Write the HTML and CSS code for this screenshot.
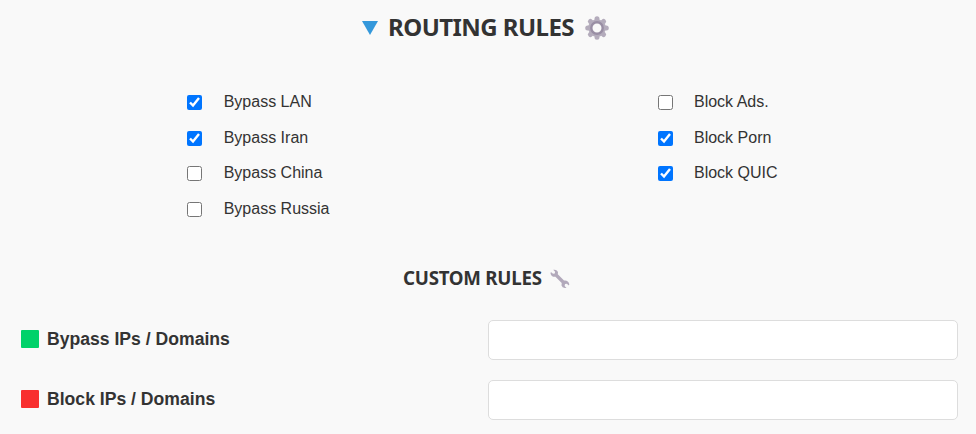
FILE: index.html
```
<!DOCTYPE html>
<html lang="en">
<head>
<meta charset="utf-8">
<title>Routing Rules</title>
<link rel="stylesheet" href="styles.css">
</head>
<body>
<main class="panel">
  <h2 class="title">
    <svg class="arrow" viewBox="0 0 16 14"><path d="M0 0H16L8 14Z" fill="#3498db"/></svg>
    <span class="title-text">ROUTING RULES</span>
    <svg class="gear" viewBox="-12 -12 24 24">
      <g stroke="#b4acbc" stroke-width="5" stroke-linecap="round"><path d="M0-9.3V9.3M-9.3 0H9.3M-6.6-6.6L6.6 6.6M6.6-6.6L-6.6 6.6"/></g>
      <circle r="8.7" fill="#b4acbc"/>
      <circle r="5.7" fill="#f9f9f9" stroke="#998ea4" stroke-width="2.4"/>
    </svg>
  </h2>
  <section class="options">
    <div class="column">
      <label class="option"><input type="checkbox" checked><span>Bypass LAN</span></label>
      <label class="option"><input type="checkbox" checked><span>Bypass Iran</span></label>
      <label class="option"><input type="checkbox"><span>Bypass China</span></label>
      <label class="option"><input type="checkbox"><span>Bypass Russia</span></label>
    </div>
    <div class="column">
      <label class="option"><input type="checkbox"><span>Block Ads.</span></label>
      <label class="option"><input type="checkbox" checked><span>Block Porn</span></label>
      <label class="option"><input type="checkbox" checked><span>Block QUIC</span></label>
    </div>
  </section>
  <h3 class="subtitle">
    <span class="subtitle-text">CUSTOM RULES</span>
    <svg class="wrench" viewBox="0 0 20 20"><path d="M3.2.8Q7.2.1 8 3.5L7.8 5.3L14 11.6Q18.2 11 19.3 15.2L18.9 16.6L16.8 14.7L15 15.1L14.6 16.9L16.5 18.9Q12.4 19.8 11.5 16.6L11.7 14.1L5.4 7.8Q1.5 8.3 .5 4.4L.9 3L3 4.8L4.8 4.5L5.1 2.7Z" fill="#b2a9bb"/></svg>
  </h3>
  <section class="fields">
    <div class="field"><label for="bypass"><i class="swatch green"></i><span>Bypass IPs / Domains</span></label><input id="bypass" type="text"></div>
    <div class="field"><label for="block"><i class="swatch red"></i><span>Block IPs / Domains</span></label><input id="block" type="text"></div>
  </section>
</main>
</body>
</html>
```
FILE: styles.css
```
* { box-sizing: border-box; }
body {
  margin: 0;
  background: #f9f9f9;
  color: #333;
  font: 16px "Liberation Sans", Arial, sans-serif;
  overflow: hidden;
}
svg { display: block; flex: none; }
.panel { height: 434px; padding: 10px 18px 0 20px; }
.title, .subtitle {
  display: flex;
  align-items: center;
  margin: 0;
  font-family: "Noto Sans", "Open Sans", sans-serif;
  font-weight: 700;
  white-space: nowrap;
}
.title { height: 34px; padding-left: 342px; font-size: 24px; }
.arrow { width: 16px; height: 14px; margin: 1px 10px 0 0; }
.title-text { width: 186px; letter-spacing: -0.55px; padding-bottom: 2px; }
.gear { width: 24px; height: 24px; margin: 1px 0 0 11px; }
.options {
  display: grid;
  grid-template-columns: 470px 1fr;
  padding: 40px 0 0 167px;
  height: 216px;
}
.option {
  display: flex;
  align-items: center;
  height: 35.7px;
}
.option input { width: 15px; height: 15px; margin: 1px 21.7px 0 0; }
.column + .column input { margin: 1px 21.4px 0 0.6px; }
.subtitle { height: 34px; padding-left: 383px; margin-top: 1px; font-size: 18.7px; }
.subtitle-text { width: 139px; letter-spacing: -0.25px; padding-bottom: 1px; }
.wrench { width: 20px; height: 20px; margin: 1px 0 0 8px; }
.fields { display: grid; gap: 20px; padding-top: 25px; }
.field { display: grid; grid-template-columns: 468px 470px; align-items: center; }
.field label { display: flex; align-items: center; font-size: 17.6px; font-weight: 700; padding-bottom: 2px; }
.swatch { width: 17.5px; height: 17.5px; margin: 0 8.5px 0 1px; border-radius: 1px; }
.green { background: #00d26a; }
.red { background: #f92f2f; }
.field input { height: 40px; width: 470px; padding: 10px; background: #fff; border: 1px solid #ddd; border-radius: 5px; }
```
